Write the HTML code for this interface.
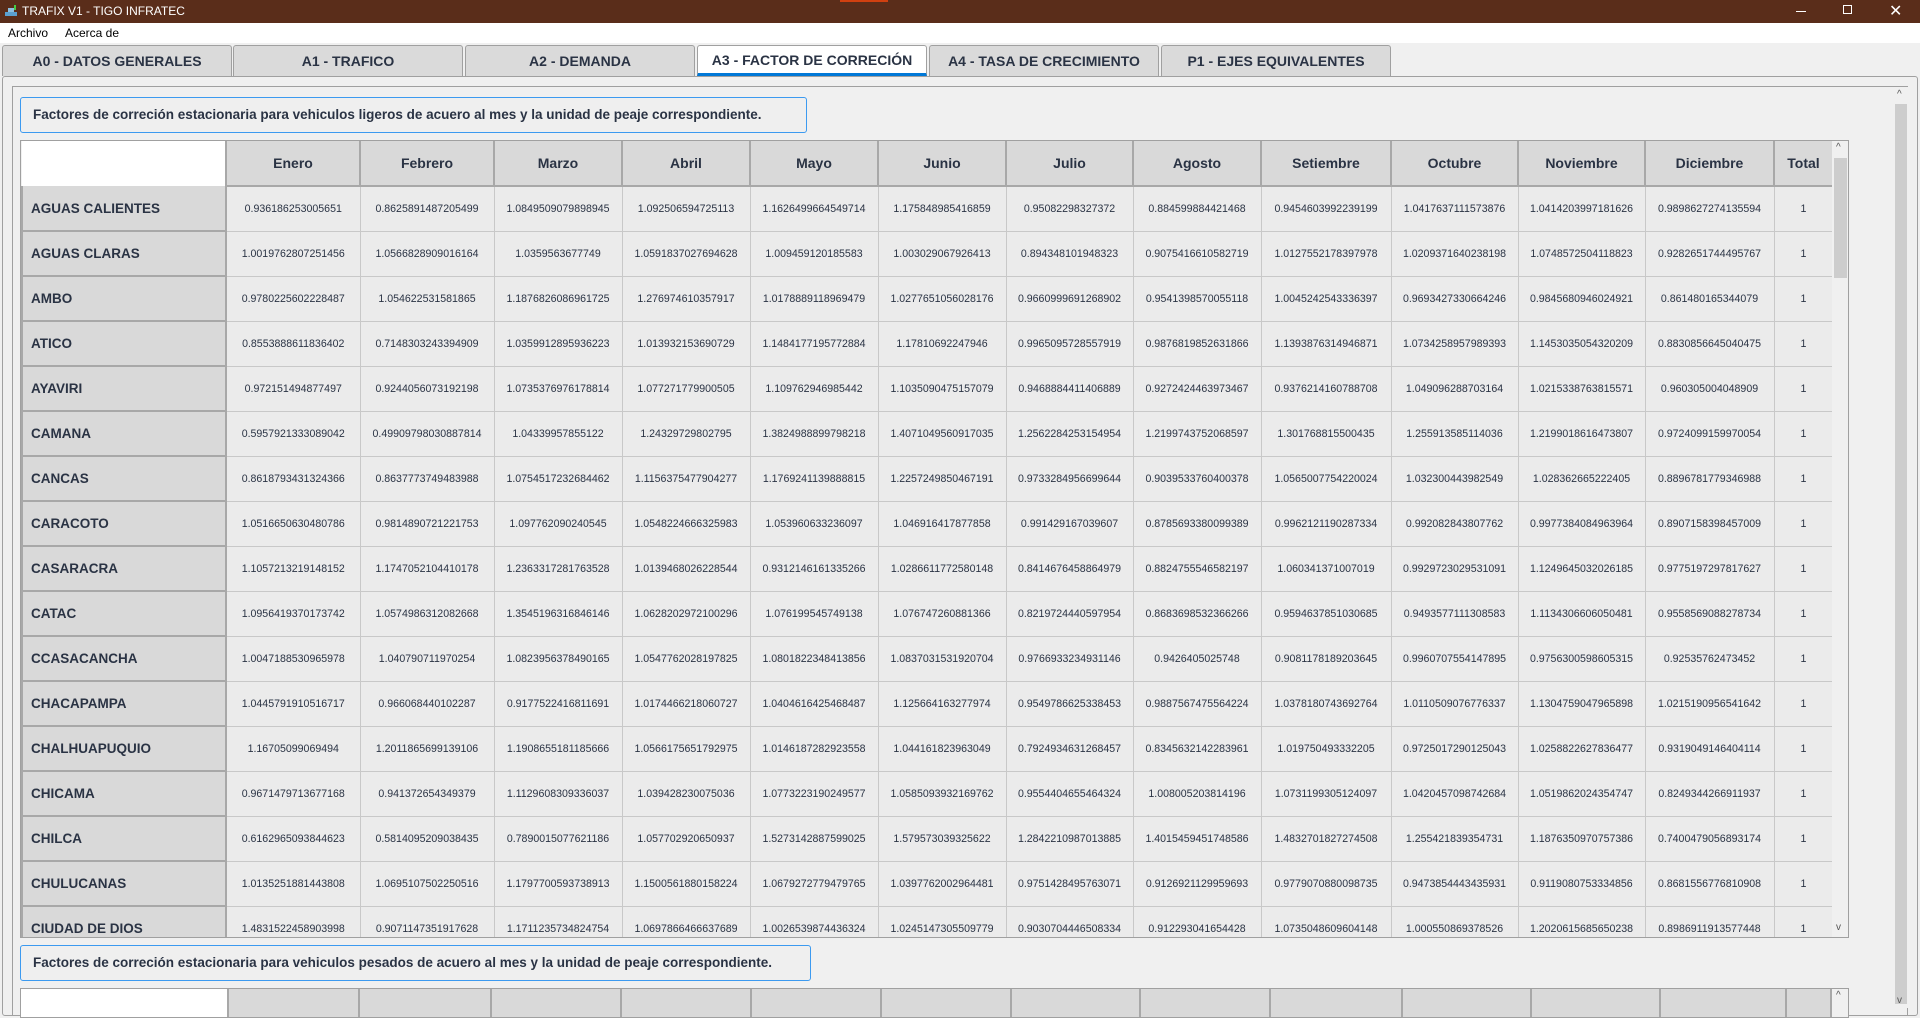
<!DOCTYPE html>
<html><head><meta charset="utf-8"><style>
*{box-sizing:border-box;margin:0;padding:0}
body{width:1920px;height:1008px;overflow:hidden;background:#f0f0f0;font-family:"Liberation Sans",sans-serif;position:relative;color:#2a3344}
.tb{position:absolute;left:0;top:0;width:1920px;height:23px;background:#5a2d1a;color:#fff;font-size:12px}
.tb .t{position:absolute;left:22px;top:4px}
.menu{position:absolute;left:0;top:23px;width:1920px;height:20px;background:#fff;font-size:12px;color:#000}
.menu span{position:absolute;top:3px}
.tab{position:absolute;top:45px;height:31px;width:230px;background:#dadada;border:1px solid #a0a0a0;border-bottom:none;border-radius:3px 3px 0 0;font-weight:bold;font-size:14px;text-align:center;line-height:30px;color:#2a3344}
.tab.on{background:#fff;border-bottom:3px solid #0078d7;height:31px;line-height:28px}
.panel{position:absolute;left:2px;top:76px;width:1916px;height:940px;border:1px solid #a0a0a0;border-radius:3px}
.inner{position:absolute;left:12px;top:86px;width:1896px;height:930px;border:1px solid #a0a0a0;background:#f0f0f0}
.lbl{position:absolute;left:20px;height:36px;border:1px solid #3c9af0;border-radius:3px;background:#efefef;font-weight:bold;font-size:13.5px;line-height:34px;padding-left:12px}
.tw{position:absolute;left:20px;width:1829px;overflow:hidden;border:1px solid #a0a0a0;background:#f0f0f0}
table{border-collapse:collapse;table-layout:fixed;position:absolute;left:0;top:0}
td,th{height:45px;border:1px solid #c8c8c8;text-align:center;font-size:10.6px;color:#2a3344;background:#ebebeb;white-space:nowrap;overflow:hidden;font-weight:normal}
th{background:#d9d9d9;font-weight:bold;font-size:14px;border:2px solid #a8a8a8;border-top:none}
th.c{background:#fff;border:none}
td.r{background:#d9d9d9;font-weight:bold;font-size:13.5px;text-align:left;padding-left:8px;border:2px solid #a8a8a8;border-top:none}
.t2 th{vertical-align:top;padding-top:34px}
.sb{position:absolute;background:#f0f0f0}
.thumb{position:absolute;background:#cdcdcd}
.ar{position:absolute;font-size:10px;color:#555}
</style></head><body>
<div class="tb"><svg style="position:absolute;left:4px;top:5px" width="14" height="13"><rect x="1" y="7" width="12" height="4" fill="#5aa0d0"/><rect x="4" y="3" width="6" height="4" fill="#8cc0e0"/><rect x="10" y="0" width="2" height="5" fill="#4c4"/></svg><span class="t">TRAFIX V1 - TIGO INFRATEC</span>
<div style="position:absolute;left:840px;top:0;width:48px;height:2px;background:#d04010"></div>
<div style="position:absolute;left:1796px;top:11px;width:10px;height:1px;background:#fff"></div>
<div style="position:absolute;left:1843px;top:5px;width:9px;height:9px;border:1px solid #fff"></div>
<div style="position:absolute;left:1889px;top:1px;color:#fff;font-size:16px">✕</div></div>
<div class="menu"><span style="left:8px">Archivo</span><span style="left:65px">Acerca de</span></div>
<div class="tab" style="left:2px">A0 - DATOS GENERALES</div>
<div class="tab" style="left:233px">A1 - TRAFICO</div>
<div class="tab" style="left:465px">A2 - DEMANDA</div>
<div class="tab on" style="left:697px">A3 - FACTOR DE CORRECIÓN</div>
<div class="tab" style="left:929px">A4 - TASA DE CRECIMIENTO</div>
<div class="tab" style="left:1161px">P1 - EJES EQUIVALENTES</div>
<div class="panel"></div>
<div class="inner"></div>
<div class="sb" style="left:1894px;top:87px;width:14px;height:921px"><div class="thumb" style="left:1px;top:17px;width:12px;height:900px"></div><div class="ar" style="left:3px;top:2px">^</div><div class="ar" style="left:3px;top:908px">v</div></div>
<div class="lbl" style="top:97px;width:787px">Factores de correción estacionaria para vehiculos ligeros de acuero al mes y la unidad de peaje correspondiente.</div>
<div class="tw" style="top:140px;height:798px">
<table style="width:1811px">
<colgroup><col style="width:204px"><col style="width:134px"><col style="width:134px"><col style="width:128px"><col style="width:128px"><col style="width:128px"><col style="width:128px"><col style="width:127px"><col style="width:128px"><col style="width:130px"><col style="width:127px"><col style="width:127px"><col style="width:129px"><col style="width:59px"></colgroup>
<tr><th class="c"></th><th>Enero</th><th>Febrero</th><th>Marzo</th><th>Abril</th><th>Mayo</th><th>Junio</th><th>Julio</th><th>Agosto</th><th>Setiembre</th><th>Octubre</th><th>Noviembre</th><th>Diciembre</th><th>Total</th></tr>
<tr><td class="r">AGUAS CALIENTES</td><td>0.936186253005651</td><td>0.8625891487205499</td><td>1.0849509079898945</td><td>1.092506594725113</td><td>1.1626499664549714</td><td>1.175848985416859</td><td>0.95082298327372</td><td>0.884599884421468</td><td>0.9454603992239199</td><td>1.0417637111573876</td><td>1.0414203997181626</td><td>0.9898627274135594</td><td>1</td></tr>
<tr><td class="r">AGUAS CLARAS</td><td>1.0019762807251456</td><td>1.0566828909016164</td><td>1.0359563677749</td><td>1.0591837027694628</td><td>1.009459120185583</td><td>1.003029067926413</td><td>0.894348101948323</td><td>0.9075416610582719</td><td>1.0127552178397978</td><td>1.0209371640238198</td><td>1.0748572504118823</td><td>0.9282651744495767</td><td>1</td></tr>
<tr><td class="r">AMBO</td><td>0.9780225602228487</td><td>1.054622531581865</td><td>1.1876826086961725</td><td>1.276974610357917</td><td>1.0178889118969479</td><td>1.0277651056028176</td><td>0.9660999691268902</td><td>0.9541398570055118</td><td>1.0045242543336397</td><td>0.9693427330664246</td><td>0.9845680946024921</td><td>0.861480165344079</td><td>1</td></tr>
<tr><td class="r">ATICO</td><td>0.8553888611836402</td><td>0.7148303243394909</td><td>1.0359912895936223</td><td>1.013932153690729</td><td>1.1484177195772884</td><td>1.17810692247946</td><td>0.9965095728557919</td><td>0.9876819852631866</td><td>1.1393876314946871</td><td>1.0734258957989393</td><td>1.1453035054320209</td><td>0.8830856645040475</td><td>1</td></tr>
<tr><td class="r">AYAVIRI</td><td>0.972151494877497</td><td>0.9244056073192198</td><td>1.0735376976178814</td><td>1.077271779900505</td><td>1.109762946985442</td><td>1.1035090475157079</td><td>0.9468884411406889</td><td>0.9272424463973467</td><td>0.9376214160788708</td><td>1.049096288703164</td><td>1.0215338763815571</td><td>0.960305004048909</td><td>1</td></tr>
<tr><td class="r">CAMANA</td><td>0.5957921333089042</td><td>0.49909798030887814</td><td>1.04339957855122</td><td>1.24329729802795</td><td>1.3824988899798218</td><td>1.4071049560917035</td><td>1.2562284253154954</td><td>1.2199743752068597</td><td>1.301768815500435</td><td>1.255913585114036</td><td>1.2199018616473807</td><td>0.9724099159970054</td><td>1</td></tr>
<tr><td class="r">CANCAS</td><td>0.8618793431324366</td><td>0.8637773749483988</td><td>1.0754517232684462</td><td>1.1156375477904277</td><td>1.1769241139888815</td><td>1.2257249850467191</td><td>0.9733284956699644</td><td>0.9039533760400378</td><td>1.0565007754220024</td><td>1.032300443982549</td><td>1.028362665222405</td><td>0.8896781779346988</td><td>1</td></tr>
<tr><td class="r">CARACOTO</td><td>1.0516650630480786</td><td>0.9814890721221753</td><td>1.097762090240545</td><td>1.0548224666325983</td><td>1.053960633236097</td><td>1.046916417877858</td><td>0.991429167039607</td><td>0.8785693380099389</td><td>0.9962121190287334</td><td>0.992082843807762</td><td>0.9977384084963964</td><td>0.8907158398457009</td><td>1</td></tr>
<tr><td class="r">CASARACRA</td><td>1.1057213219148152</td><td>1.1747052104410178</td><td>1.2363317281763528</td><td>1.0139468026228544</td><td>0.9312146161335266</td><td>1.0286611772580148</td><td>0.8414676458864979</td><td>0.8824755546582197</td><td>1.060341371007019</td><td>0.9929723029531091</td><td>1.1249645032026185</td><td>0.9775197297817627</td><td>1</td></tr>
<tr><td class="r">CATAC</td><td>1.0956419370173742</td><td>1.0574986312082668</td><td>1.3545196316846146</td><td>1.0628202972100296</td><td>1.076199545749138</td><td>1.076747260881366</td><td>0.8219724440597954</td><td>0.8683698532366266</td><td>0.9594637851030685</td><td>0.9493577111308583</td><td>1.1134306606050481</td><td>0.9558569088278734</td><td>1</td></tr>
<tr><td class="r">CCASACANCHA</td><td>1.0047188530965978</td><td>1.040790711970254</td><td>1.0823956378490165</td><td>1.0547762028197825</td><td>1.0801822348413856</td><td>1.0837031531920704</td><td>0.9766933234931146</td><td>0.9426405025748</td><td>0.9081178189203645</td><td>0.9960707554147895</td><td>0.9756300598605315</td><td>0.92535762473452</td><td>1</td></tr>
<tr><td class="r">CHACAPAMPA</td><td>1.0445791910516717</td><td>0.966068440102287</td><td>0.9177522416811691</td><td>1.0174466218060727</td><td>1.0404616425468487</td><td>1.125664163277974</td><td>0.9549786625338453</td><td>0.9887567475564224</td><td>1.0378180743692764</td><td>1.0110509076776337</td><td>1.1304759047965898</td><td>1.0215190956541642</td><td>1</td></tr>
<tr><td class="r">CHALHUAPUQUIO</td><td>1.16705099069494</td><td>1.2011865699139106</td><td>1.1908655181185666</td><td>1.0566175651792975</td><td>1.0146187282923558</td><td>1.044161823963049</td><td>0.7924934631268457</td><td>0.8345632142283961</td><td>1.019750493332205</td><td>0.9725017290125043</td><td>1.0258822627836477</td><td>0.9319049146404114</td><td>1</td></tr>
<tr><td class="r">CHICAMA</td><td>0.9671479713677168</td><td>0.941372654349379</td><td>1.1129608309336037</td><td>1.039428230075036</td><td>1.0773223190249577</td><td>1.0585093932169762</td><td>0.9554404655464324</td><td>1.008005203814196</td><td>1.0731199305124097</td><td>1.0420457098742684</td><td>1.0519862024354747</td><td>0.8249344266911937</td><td>1</td></tr>
<tr><td class="r">CHILCA</td><td>0.6162965093844623</td><td>0.5814095209038435</td><td>0.7890015077621186</td><td>1.057702920650937</td><td>1.5273142887599025</td><td>1.579573039325622</td><td>1.2842210987013885</td><td>1.4015459451748586</td><td>1.4832701827274508</td><td>1.255421839354731</td><td>1.1876350970757386</td><td>0.7400479056893174</td><td>1</td></tr>
<tr><td class="r">CHULUCANAS</td><td>1.0135251881443808</td><td>1.0695107502250516</td><td>1.1797700593738913</td><td>1.1500561880158224</td><td>1.0679272779479765</td><td>1.0397762002964481</td><td>0.9751428495763071</td><td>0.9126921129959693</td><td>0.9779070880098735</td><td>0.9473854443435931</td><td>0.9119080753334856</td><td>0.8681556776810908</td><td>1</td></tr>
<tr><td class="r">CIUDAD DE DIOS</td><td>1.4831522458903998</td><td>0.9071147351917628</td><td>1.1711235734824754</td><td>1.0697866466637689</td><td>1.0026539874436324</td><td>1.0245147305509779</td><td>0.9030704446508334</td><td>0.912293041654428</td><td>1.0735048609604148</td><td>1.000550869378526</td><td>1.2020615685650238</td><td>0.8986911913577448</td><td>1</td></tr>
</table>
<div class="sb" style="left:1811px;top:0;width:17px;height:798px"><div class="thumb" style="left:2px;top:17px;width:13px;height:120px"></div><div class="ar" style="left:4px;top:1px">^</div><div class="ar" style="left:4px;top:781px">v</div></div>
</div>
<div class="lbl" style="top:945px;width:791px">Factores de correción estacionaria para vehiculos pesados de acuero al mes y la unidad de peaje correspondiente.</div>
<div class="tw" style="top:988px;height:30px">
<table class="t2" style="width:1811px">
<colgroup><col style="width:204px"><col style="width:129px"><col style="width:129px"><col style="width:128px"><col style="width:128px"><col style="width:128px"><col style="width:128px"><col style="width:127px"><col style="width:128px"><col style="width:130px"><col style="width:127px"><col style="width:127px"><col style="width:124px"><col style="width:44px"></colgroup>
<tr><th class="c"></th><th>Enero</th><th>Febrero</th><th>Marzo</th><th>Abril</th><th>Mayo</th><th>Junio</th><th>Julio</th><th>Agosto</th><th>Setiembre</th><th>Octubre</th><th>Noviembre</th><th>Diciembre</th><th>Total</th></tr>
</table>
<div class="sb" style="left:1811px;top:0;width:17px;height:30px"><div class="ar" style="left:4px;top:1px">^</div></div>
</div>
</body></html>
